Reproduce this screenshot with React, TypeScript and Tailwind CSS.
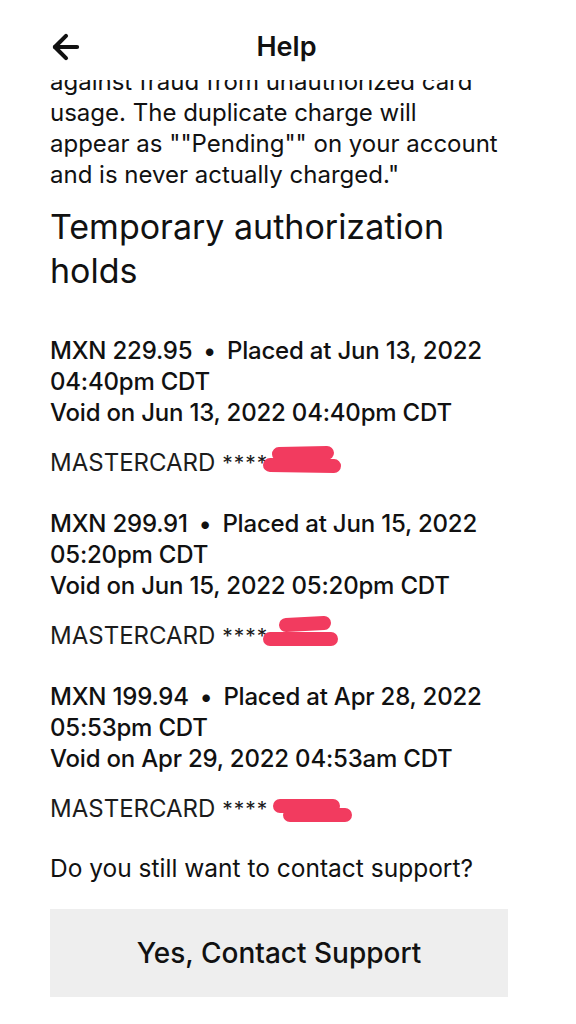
import { ArrowLeft } from "lucide-react"

interface Hold {
  amount: string
  placed: string
  placedTime: string
  voided: string
  scribble: { w: number; top: number; left: number; d: string }
}

const holds: Hold[] = [
  {
    amount: "MXN 229.95",
    placed: "Placed at Jun 13, 2022",
    placedTime: "04:40pm CDT",
    voided: "Void on Jun 13, 2022 04:40pm CDT",
    scribble: { w: 90, top: -4, left: 210, d: "M19 11 L67 10 M10 22 L74 23" }
  },
  {
    amount: "MXN 299.91",
    placed: "Placed at Jun 15, 2022",
    placedTime: "05:20pm CDT",
    voided: "Void on Jun 15, 2022 05:20pm CDT",
    scribble: { w: 90, top: -4, left: 210, d: "M26 9 L64 7 M10 23 L71 23" }
  },
  {
    amount: "MXN 199.94",
    placed: "Placed at Apr 28, 2022",
    placedTime: "05:53pm CDT",
    voided: "Void on Apr 29, 2022 04:53am CDT",
    scribble: { w: 96, top: -4, left: 210, d: "M20 17 L73 17 M30 26 L85 26" }
  }
]

function HoldItem({ hold, first }: { hold: Hold; first: boolean }) {
  const s = hold.scribble
  return (
    <div className={first ? "mt-[42px]" : "mt-[29px]"}>
      <p className="text-[24px] font-medium leading-[31px] tracking-[-0.2px]">
        {hold.amount}
        <span className="mx-[11px]">•</span>
        {hold.placed}
        <br />
        {hold.placedTime}
        <br />
        {hold.voided}
      </p>
      <p className="relative mt-[19px] text-[24px] font-normal leading-[31px] text-[#1c1c1c]">
        MASTERCARD <span className="text-[21px] tracking-[1px]">****</span>
        <svg
          width={s.w}
          height={34}
          viewBox={`0 0 ${s.w} 34`}
          className="absolute"
          style={{ left: s.left, top: s.top }}>
          <path
            d={s.d}
            stroke="#f23b5f"
            strokeWidth={14}
            strokeLinecap="round"
            fill="none"
          />
        </svg>
      </p>
    </div>
  )
}

export default function App() {
  return (
    <div
      className="flex h-[1024px] w-[576px] flex-col overflow-hidden bg-white text-[#111]"
      style={{ fontFamily: "Inter, 'Liberation Sans', sans-serif" }}>
      <header className="relative z-10 flex h-[80px] shrink-0 items-start bg-white pt-[30px]">
        <div className="flex h-[34px] w-full items-center px-[50px]">
          <ArrowLeft size={38} strokeWidth={2.6} className="-ml-[3px]" />
          <h1 className="-ml-[38px] flex-1 text-center text-[27px] font-semibold">
            Help
          </h1>
        </div>
      </header>

      <main className="flex-1 overflow-hidden">
        <div className="-mt-[14px] pl-[50px] pr-[60px]">
          <p className="text-[24px] leading-[31px]">
            against fraud from unauthorized card
            <br />
            usage. The duplicate charge will
            <br />
            appear as ""Pending"" on your account
            <br />
            and is never actually charged."
          </p>

          <h2 className="mt-[15px] text-[34px] font-normal leading-[44px]">
            Temporary authorization
            <br />
            holds
          </h2>

          {holds.map((h, i) => (
            <HoldItem key={h.amount} hold={h} first={i === 0} />
          ))}

          <p className="mt-[28px] text-[24.5px] leading-[31px]">
            Do you still want to contact support?
          </p>

          <button className="mt-[25px] flex h-[88px] w-[458px] items-center justify-center bg-[#eeeeee] text-[28px] font-medium">
            Yes, Contact Support
          </button>
        </div>
      </main>
    </div>
  )
}
